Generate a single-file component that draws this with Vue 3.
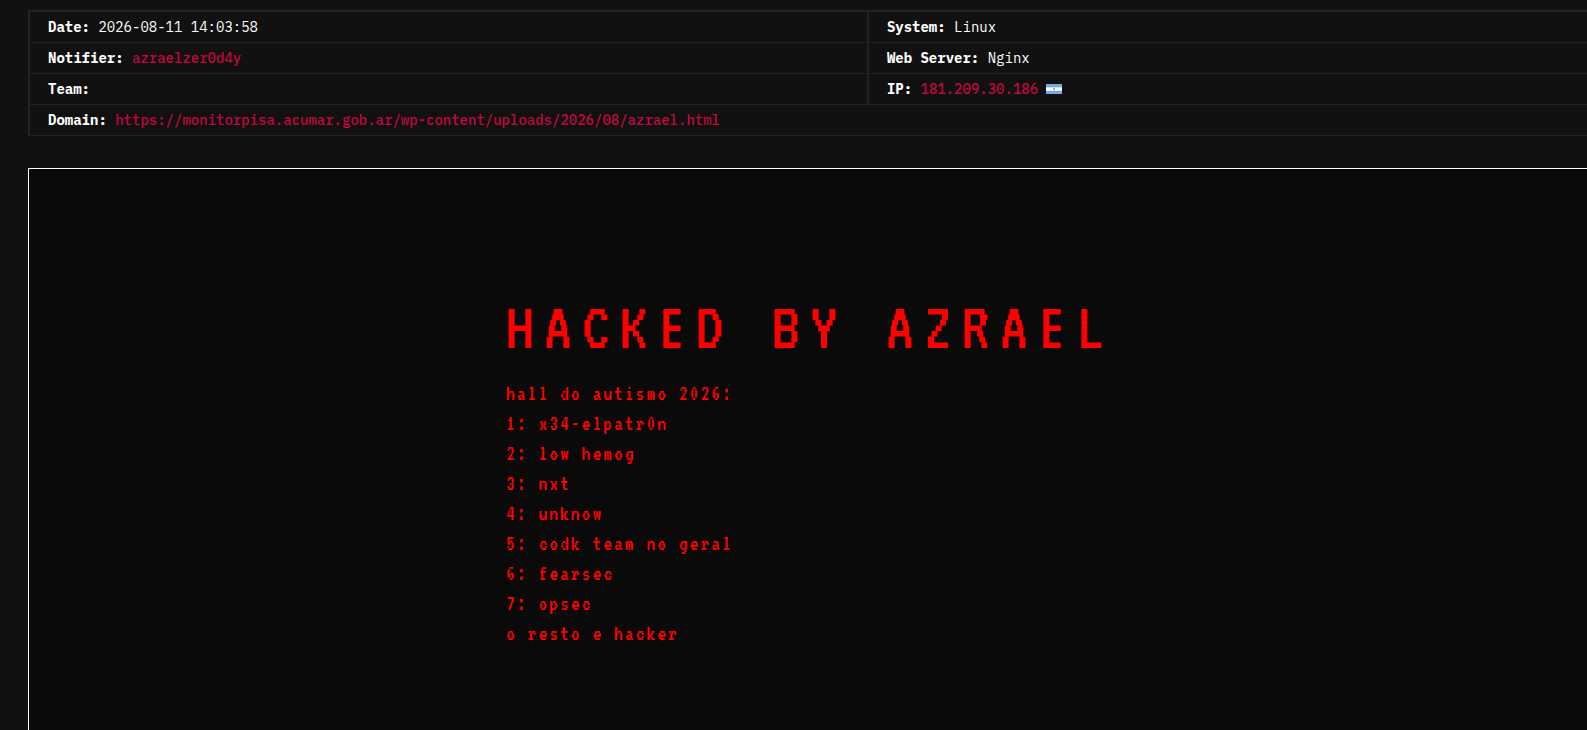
<script setup>
const rows = [
  [
    { label: 'Date:', value: '2026-08-11 14:03:58' },
    { label: 'System:', value: 'Linux' },
  ],
  [
    { label: 'Notifier:', value: 'azraelzer0d4y', href: '#notifier' },
    { label: 'Web Server:', value: 'Nginx' },
  ],
  [
    { label: 'Team:', value: '' },
    { label: 'IP:', value: '181.209.30.186', href: '#ip', flag: true },
  ],
  [
    {
      label: 'Domain:',
      value: 'https://monitorpisa.acumar.gob.ar/wp-content/uploads/2026/08/azrael.html',
      href: '#domain',
    },
  ],
]

const lines = [
  'hall do autismo 2026:',
  '1: x34-elpatr0n',
  '2: low hemog',
  '3: nxt',
  '4: unknow',
  '5: codk team no geral',
  '6: fearsec',
  '7: opsec',
  'o resto e hacker',
]
</script>

<template>
  <main class="page">
    <table class="details">
      <tbody>
        <tr v-for="(row, i) in rows" :key="i">
          <td v-for="cell in row" :key="cell.label" :colspan="row.length === 1 ? 2 : 1">
            <strong>{{ cell.label }}</strong>
            {{ ' ' }}
            <a v-if="cell.href" :href="cell.href">{{ cell.value }}</a>
            <span v-else>{{ cell.value }}</span>
            <svg v-if="cell.flag" class="flag" viewBox="0 0 16 10" role="img" aria-label="Argentina">
              <rect width="16" height="10" fill="#74acdf" />
              <rect y="3.4" width="16" height="3.3" fill="#fff" />
              <rect x="7" y="4" width="2" height="2" fill="#e0a048" />
            </svg>
          </td>
        </tr>
      </tbody>
    </table>

    <section class="mirror">
      <div class="message">
        <h1>HACKED BY AZRAEL</h1>
        <p v-for="line in lines" :key="line">{{ line }}</p>
      </div>
    </section>
  </main>
</template>

<style>
body {
  margin: 0;
  background: #111;
}
</style>

<style scoped>
.page {
  box-sizing: border-box;
  display: flex;
  flex-direction: column;
  min-height: 100vh;
  padding: 10px 0 0 28px;
  background: #111;
  color: #fff;
  font-family: "IBM Plex Mono", "Liberation Mono", monospace;
  font-size: 14px;
  line-height: 20px;
}

.details {
  width: 100%;
  margin-bottom: 32px;
  border-top: 2px solid #222;
  border-left: 2px solid #222;
  border-spacing: 0;
  table-layout: auto;
}

.details td {
  padding: 5px 18px;
  border-bottom: 1px solid #222;
}

.details td:first-child:not([colspan="2"]) {
  width: 53.75%;
  box-sizing: border-box;
}

.details td + td {
  border-left: 2px solid #222;
}

.details a {
  color: #c3073f;
  font-weight: 500;
  text-decoration: none;
}

.flag {
  width: 16px;
  height: 10px;
  margin-left: 8px;
}

.mirror {
  flex: 1;
  display: flex;
  justify-content: center;
  padding: 130px 0 72px 4px;
  border-top: 1px solid #fff;
  border-left: 1px solid #fff;
  background: #0a0a0a;
  color: #f00;
}

h1 {
  margin: 0 0 23px;
  font-family: "VT323", "DejaVu Sans Mono", monospace;
  font-size: 70px;
  font-weight: 400;
  line-height: 56px;
  letter-spacing: 10px;
}

p {
  margin: 0;
  font-family: "VT323", "Liberation Mono", monospace;
  font-size: 22px;
  font-weight: 400;
  line-height: 30px;
  letter-spacing: 2px;
}
</style>
